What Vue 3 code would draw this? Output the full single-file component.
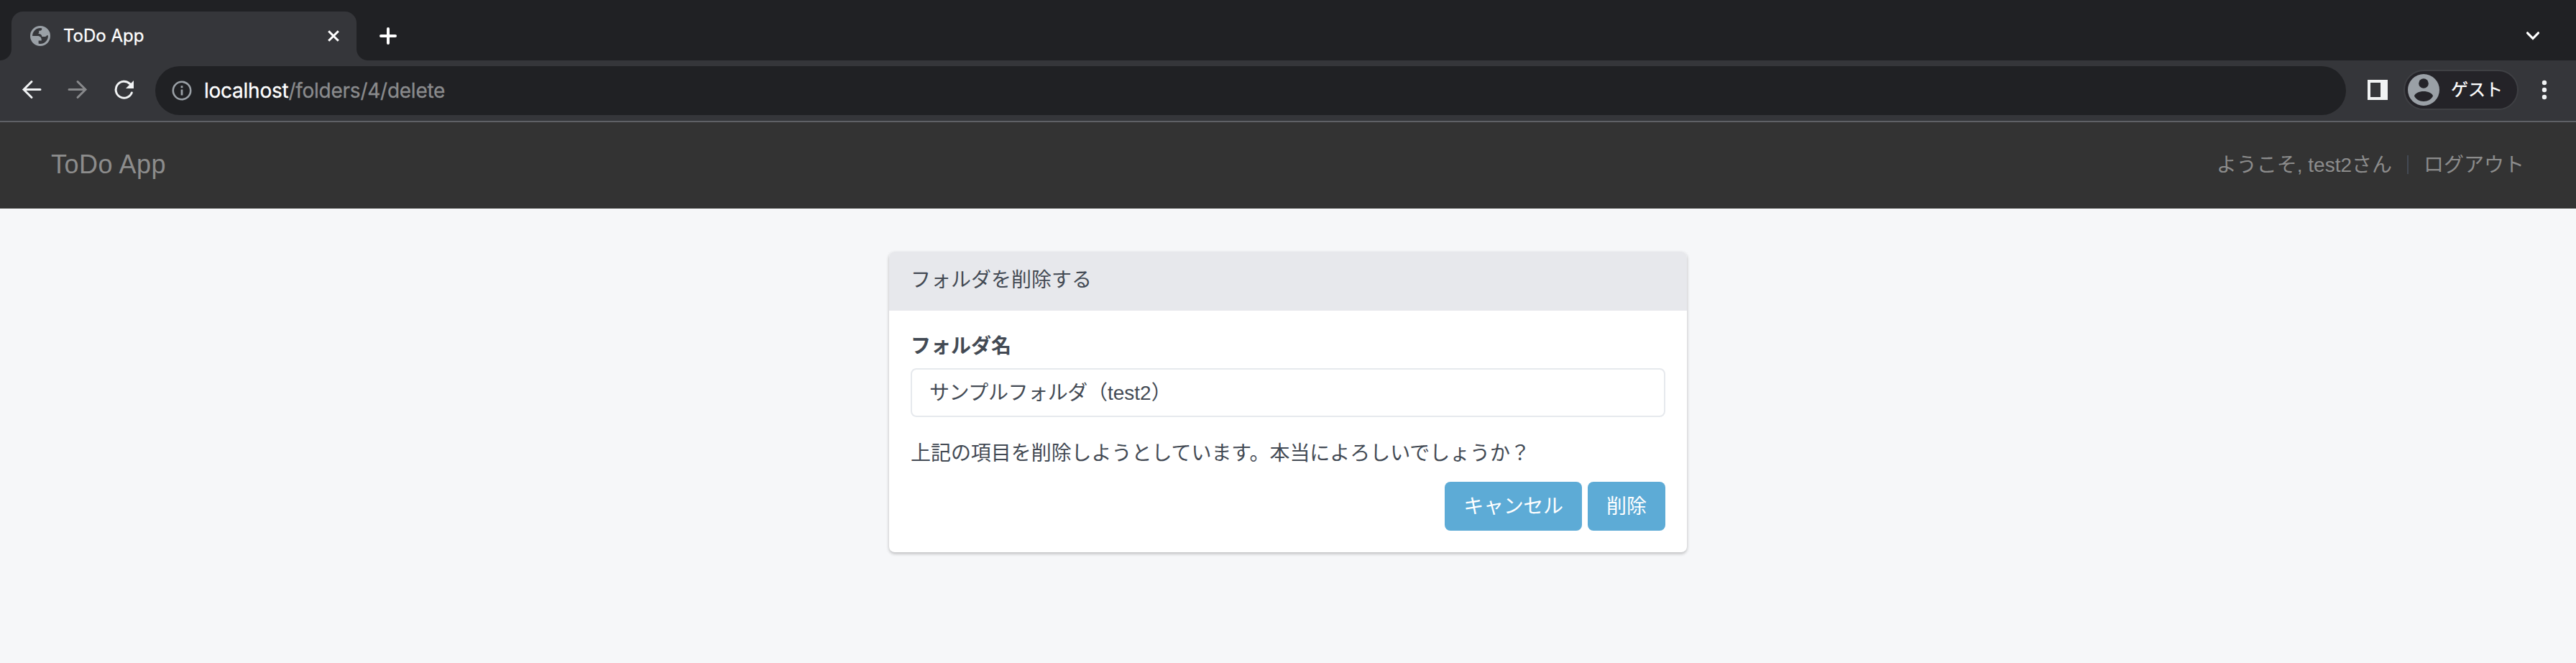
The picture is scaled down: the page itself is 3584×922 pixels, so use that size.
<script setup>
const message = '上記の項目を削除しようとしています。本当によろしいでしょうか？'
</script>

<template>
  <div class="window">
    <div class="tabstrip">
      <div class="tab">
        <svg class="globe" viewBox="2 2 20 20">
          <circle cx="12" cy="12" r="8.900" fill="none" stroke="#9aa0a6" stroke-width="2.200" />
          <path fill="#9aa0a6" d="M3 12H9.200c2.800 0 4.100 1.500 4.100 4.600h-3V20.500A9 9 0 0 1 3 12z" />
          <path fill="#9aa0a6" d="M13.600 3.300V5c0 1-.7 1.800-1.700 1.800h-1.200v1.800c0 .6-.3 1-.9 1 2.600.2 3.600 1 4 3.200h2c1.700 0 2.500-.6 2.900-1.500L21 12A9 9 0 0 0 13.600 3.300z" />
        </svg>
        <span class="tab-title">ToDo App</span>
        <svg class="close" viewBox="0 0 16 16"><path d="M1.200 1.200l13.600 13.600M14.800 1.200l-13.600 13.600" fill="none" stroke="#fff" stroke-width="3" /></svg>
      </div>
      <svg class="plus" viewBox="0 0 24 24"><path d="M12 2v20M2 12h20" fill="none" stroke="#fff" stroke-width="4" stroke-linecap="round" /></svg>
      <svg class="chevron" viewBox="0 0 18 12"><path d="M1.500 1.800l7.500 7.700 7.500-7.700" fill="none" stroke="#fff" stroke-width="3.200" stroke-linecap="round" stroke-linejoin="miter" /></svg>
    </div>

    <div class="toolbar">
      <svg class="arrow" viewBox="0 0 28 28"><path d="M26 13.500H3M14 2.500l-11 11 11 11" fill="none" stroke="#f1f3f4" stroke-width="3" stroke-linecap="round" /></svg>
      <svg class="arrow forward" viewBox="0 0 28 28"><path d="M2 13.500h23M14 2.500l11 11-11 11" fill="none" stroke="#88898b" stroke-width="3" stroke-linecap="round" /></svg>
      <svg class="reload" viewBox="0 0 28 28">
        <path d="M21.800 5.600A11.500 11.500 0 1 0 24.300 18" fill="none" stroke="#f1f3f4" stroke-width="3" stroke-linecap="round" />
        <path d="M27 1v11H16z" fill="#f1f3f4" />
      </svg>
      <div class="omnibox">
        <svg class="info" viewBox="0 0 28 28">
          <circle cx="14" cy="14" r="12.200" fill="none" stroke="#9aa0a6" stroke-width="2.600" />
          <path d="M14 12.500v8M14 7.200v3" stroke="#9aa0a6" stroke-width="2.800" />
        </svg>
        <span class="url"><span class="host">localhost</span>/folders/4/delete</span>
      </div>
      <svg class="panel-icon" viewBox="0 0 28 28"><path fill="#f1f3f4" fill-rule="evenodd" d="M0 0h28v28H0zM4 4v20h14V4z" /></svg>
      <div class="profile">
        <svg class="avatar" viewBox="0 0 44 44">
          <circle cx="22" cy="22" r="22" fill="#9aa0a6" />
          <circle cx="22" cy="13" r="6.800" fill="#242328" />
          <path d="M9 30.500C10 26.500 16 24 22 24s12 2.500 13 6.500C33 35 28 38 22 38S11 35 9 30.500z" fill="#242328" />
        </svg>
        <span class="guest">ゲスト</span>
      </div>
      <svg class="dots" viewBox="0 0 8 28"><g fill="#f1f3f4"><circle cx="4" cy="4" r="3.200" /><circle cx="4" cy="14" r="3.200" /><circle cx="4" cy="24" r="3.200" /></g></svg>
    </div>

    <header class="navbar">
      <span class="brand">ToDo App</span>
      <span class="welcome">ようこそ, test2さん</span>
      <span class="divider"></span>
      <span class="logout">ログアウト</span>
    </header>

    <main>
      <section class="card">
        <div class="card-head"><span>フォルダを削除する</span></div>
        <div class="card-body">
          <div class="label">フォルダ名</div>
          <div class="field"><span class="kana">サンプルフォルダ</span><span>（test2）</span></div>
          <div class="message">{{ message }}</div>
          <div class="actions">
            <button class="cancel">キャンセル</button>
            <button class="remove">削除</button>
          </div>
        </div>
      </section>
    </main>
  </div>
</template>

<style>
body { margin: 0; background: #f6f7f9; }
</style>

<style scoped>
.window {
  width: 3584px;
  height: 922px;
  overflow: hidden;
  background: #f6f7f9;
  font-family: "Liberation Sans", "Noto Sans CJK JP", sans-serif;
  font-size: 28px;
  line-height: 40px;
  color: #434a54;
}
svg { display: block; flex: none; }
span { white-space: nowrap; }
.tabstrip {
  display: flex;
  height: 84px;
  background: #202124;
  box-sizing: border-box;
  padding: 16px 51px 0 16px;
}
.tab {
  position: relative;
  width: 480px;
  height: 68px;
  box-sizing: border-box;
  padding: 0 24px 0 26px;
  display: flex;
  align-items: center;
  background: #35363a;
  border-radius: 16px 16px 0 0;
}
.tab::before, .tab::after {
  content: "";
  position: absolute;
  bottom: 0;
  width: 16px;
  height: 16px;
}
.tab::before { left: -16px; background: radial-gradient(circle at 0 0, transparent 15.500px, #35363a 16.500px); }
.tab::after { right: -16px; background: radial-gradient(circle at 100% 0, transparent 15.500px, #35363a 16.500px); }
.globe { width: 28px; height: 28px; }
.tab-title {
  margin-left: 18px;
  font-family: Inter, sans-serif;
  font-size: 24px;
  font-weight: 400;
  line-height: 32px;
  color: #fff;
  -webkit-text-stroke: .3px #fff;
}
.close { width: 16px; height: 16px; margin-left: auto; }
.plus { width: 24px; height: 24px; margin: 22px 0 0 32px; }
.chevron { width: 18px; height: 12px; margin: 28px 0 0 auto; }
.toolbar {
  display: flex;
  align-items: center;
  height: 86px;
  box-sizing: border-box;
  padding: 0 40px 2px 30px;
  background: #35363a;
  border-bottom: 2px solid #5f6166;
}
.arrow { width: 28px; height: 28px; }
.forward { margin-left: 36px; }
.reload { width: 28px; height: 28px; margin-left: 37px; }
.omnibox {
  display: flex;
  align-items: center;
  width: 3048px;
  height: 68px;
  margin: 2px 30px 0 29px;
  box-sizing: border-box;
  padding-left: 23px;
  border-radius: 34px;
  background: #202124;
}
.info { width: 28px; height: 28px; }
.url {
  margin-left: 17px;
  font-family: Inter, sans-serif;
  font-size: 28px;
  letter-spacing: -.250px;
  color: #8a8b8d;
  -webkit-text-stroke: .3px currentColor;
}
.host { color: #fff; }
.panel-icon { width: 28px; height: 28px; }
.profile {
  display: flex;
  align-items: center;
  width: 160px;
  height: 56px;
  margin-left: 22px;
  box-sizing: border-box;
  padding-left: 4px;
  border: 2px solid #3f4044;
  border-radius: 28px;
  background: #242328;
}
.avatar { width: 44px; height: 44px; }
.guest { margin-left: 16px; font-size: 24px; line-height: 44px; color: #fff; -webkit-text-stroke: .3px #fff; }
.dots { width: 8px; height: 28px; margin-left: 32px; }
.navbar {
  display: flex;
  align-items: center;
  height: 120px;
  box-sizing: border-box;
  padding: 0 72px 0 71px;
  background: #333;
  color: #8c8c8c;
}
.brand { font-size: 36px; letter-spacing: .5px; padding-bottom: 2px; }
.welcome { margin-left: auto; }
.divider { width: 2px; height: 26px; margin: 0 21px 2px 21px; background: #434a54; }
.card {
  width: 1110px;
  height: 418px;
  margin: 60px auto 0;
  overflow: hidden;
  border-radius: 8px;
  background: #fff;
  box-shadow: 0 2px 4px rgba(0, 0, 0, .25);
}
.card-head {
  display: flex;
  align-items: center;
  height: 82px;
  box-sizing: border-box;
  padding: 0 30px 2px;
  background: #e7e8ec;
}
.card-body { padding: 30px 30px 0; }
.label { margin-bottom: 10px; font-weight: 700; }
.field {
  display: flex;
  align-items: center;
  height: 68px;
  box-sizing: border-box;
  padding: 2px 24px 0;
  border: 2px solid #e6e9ed;
  border-radius: 8px;
}
.kana { letter-spacing: -.4px; }
.message { margin-top: 31px; letter-spacing: -.050px; }
.actions { display: flex; justify-content: flex-end; gap: 8px; margin-top: 19px; }
button {
  height: 68px;
  padding: 1px 0 0;
  border: 0;
  border-radius: 8px;
  background: #5dabd6;
  color: #fff;
  font: inherit;
}
.cancel { width: 191px; letter-spacing: -.3px; }
.remove { width: 108px; }
</style>
